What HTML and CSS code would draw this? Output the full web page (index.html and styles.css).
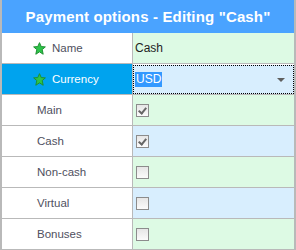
FILE: index.html
```html
<html>
  <head>
    <title>Payment options - Editing "Cash"</title>
    <link rel="stylesheet" href="styles.css">
  </head>
  <body>
    <div class="editor">
      <div class="title">Payment options - Editing "Cash"</div>

      <div class="row">
        <div class="label"><svg class="star" viewBox="0 0 12 12"><polygon points="6,0.6 7.6,4.2 11.4,4.5 8.5,7 9.4,11.3 6,9.1 2.6,11.3 3.5,7 0.6,4.5 4.4,4.2"/></svg>Name</div>
        <div class="value green">Cash</div>
      </div>

      <div class="row">
        <div class="label selected"><svg class="star" viewBox="0 0 12 12"><polygon points="6,0.6 7.6,4.2 11.4,4.5 8.5,7 9.4,11.3 6,9.1 2.6,11.3 3.5,7 0.6,4.5 4.4,4.2"/></svg>Currency</div>
        <div class="value blue focus"><span class="picked">USD</span><span class="arrow"></span></div>
      </div>

      <div class="row">
        <div class="label plain">Main</div>
        <div class="value green"><span class="check on"></span></div>
      </div>

      <div class="row">
        <div class="label plain">Cash</div>
        <div class="value blue"><span class="check on"></span></div>
      </div>

      <div class="row">
        <div class="label plain">Non-cash</div>
        <div class="value green"><span class="check"></span></div>
      </div>

      <div class="row">
        <div class="label plain">Virtual</div>
        <div class="value blue"><span class="check"></span></div>
      </div>

      <div class="row">
        <div class="label plain">Bonuses</div>
        <div class="value green"><span class="check"></span></div>
      </div>
    </div>
  </body>
</html>
```

FILE: styles.css
```css
body {
  margin: 0px;
  font-family: "Liberation Sans", Arial, sans-serif;
  font-size: 11px;
}

.editor {
  width: 296px;
  height: 250px;
  box-sizing: border-box;
  border-left: 2px solid #b9b9b9;
  border-right: 2px solid #b9b9b9;
  background-color: #ffffff;
}

.title {
  height: 33px;
  background-color: #4aa3ff;
  color: #ffffff;
  font-weight: bold;
  font-size: 15px;
  letter-spacing: 0.15px;
  display: flex;
  align-items: center;
  justify-content: center;
}

.row {
  display: flex;
  height: 31px;
  box-sizing: border-box;
  border-bottom: 1px solid #b9b9b9;
}

.label {
  width: 131px;
  border-right: 1px solid #b9b9b9;
  display: flex;
  align-items: center;
  padding-left: 31px;
  box-sizing: border-box;
  color: #4f5060;
  font-size: 11.5px;
}

.label.plain {
  padding-left: 35px;
}

.label.selected {
  background-color: #00a3ee;
  color: #ffffff;
}

.star {
  width: 13px;
  height: 13px;
  margin-right: 6px;
}

.star polygon {
  fill: #2ec34a;
  stroke: #1d8f30;
  stroke-width: 0.9;
  stroke-linejoin: round;
}

.value {
  flex: 1;
  display: flex;
  align-items: center;
  padding-left: 2px;
  color: #1e1e1e;
  font-size: 12px;
}

.green {
  background-color: #ddfae4;
}

.blue {
  background-color: #d8eefe;
}

.focus {
  border: 1px dotted #000000;
  margin: 1px 0px 0px 0px;
  padding-left: 1px;
  position: relative;
}

.picked {
  background-color: #3399ff;
  color: #ffffff;
  padding: 0px 1px;
  line-height: 15px;
}

.arrow {
  position: absolute;
  right: 8px;
  top: 12px;
  border-left: 4px solid transparent;
  border-right: 4px solid transparent;
  border-top: 4px solid #5f5f5f;
}

.check {
  width: 13px;
  height: 13px;
  box-sizing: border-box;
  margin-left: 1px;
  border: 1px solid #8c8c8c;
  background: linear-gradient(#e6e6e6, #fbfbfb);
  position: relative;
}

.check.on::after {
  content: "";
  position: absolute;
  left: 3px;
  top: 1px;
  width: 3px;
  height: 6px;
  border-right: 2px solid #666666;
  border-bottom: 2px solid #666666;
  transform: rotate(40deg);
}
```
